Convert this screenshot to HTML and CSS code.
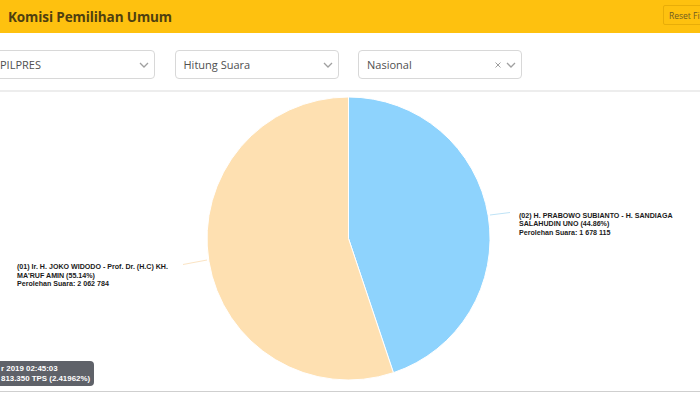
FILE: index.html
```html
<!DOCTYPE html>
<html lang="id">
<head>
    <meta charset="UTF-8">
    <meta name="viewport" content="width=device-width, initial-scale=1.0">
    <title>Komisi Pemilihan Umum</title>
    <link rel="stylesheet" href="styles.css">
</head>
<body>
    <header class="topbar">
        <div class="topbar-title">Komisi Pemilihan Umum</div>
        <button class="reset-btn">Reset Filter</button>
    </header>

    <section class="filters">
        <div class="select">
            <span class="select-value">PILPRES</span>
            <span class="select-icons">
                <svg class="chevron" viewBox="0 0 10 6" width="10" height="6"><path d="M1 1 L5 5 L9 1" fill="none" stroke="#a0a0a0" stroke-width="1.3"/></svg>
            </span>
        </div>
        <div class="select">
            <span class="select-value">Hitung Suara</span>
            <span class="select-icons">
                <svg class="chevron" viewBox="0 0 10 6" width="10" height="6"><path d="M1 1 L5 5 L9 1" fill="none" stroke="#a0a0a0" stroke-width="1.3"/></svg>
            </span>
        </div>
        <div class="select">
            <span class="select-value">Nasional</span>
            <span class="select-icons">
                <svg class="clear" viewBox="0 0 6 6" width="6" height="6"><path d="M0.5 0.5 L5.5 5.5 M5.5 0.5 L0.5 5.5" fill="none" stroke="#a0a0a0" stroke-width="1"/></svg>
                <svg class="chevron" viewBox="0 0 10 6" width="10" height="6"><path d="M1 1 L5 5 L9 1" fill="none" stroke="#a0a0a0" stroke-width="1.3"/></svg>
            </span>
        </div>
    </section>

    <main class="chart">
        <svg class="pie" viewBox="0 0 700 299" width="700" height="299">
            <path class="slice-02" d="M348.5 146.5 L348.5 5 A141.5 141.5 0 0 1 393.4 280.7 Z"/>
            <path class="slice-01" d="M348.5 146.5 L393.4 280.7 A141.5 141.5 0 1 1 348.5 5 Z"/>
            <path class="tick-02" d="M490 123 L510 120.5"/>
            <path class="tick-01" d="M207 168 L183 172.5"/>
            <text class="pie-label" x="519" y="125.5">(02) H. PRABOWO SUBIANTO - H. SANDIAGA</text>
            <text class="pie-label" x="519" y="134.3">SALAHUDIN UNO (44.86%)</text>
            <text class="pie-label" x="519" y="143">Perolehan Suara: 1 678 115</text>
            <text class="pie-label" x="17" y="177.2">(01) Ir. H. JOKO WIDODO - Prof. Dr. (H.C) KH.</text>
            <text class="pie-label" x="17" y="185.8">MA'RUF AMIN (55.14%)</text>
            <text class="pie-label" x="17" y="194.4">Perolehan Suara: 2 062 784</text>
        </svg>

        <div class="update-info">
            <div>r 2019 02:45:03</div>
            <div>813.350 TPS (2.41962%)</div>
        </div>
    </main>
</body>
</html>
```

FILE: styles.css
```css
body {
    margin: 0;
    padding: 0;
    font-family: 'Open Sans', 'Noto Sans', sans-serif;
    background-color: #ffffff;
    overflow: hidden;
    width: 700px;
    height: 393px;
}

.topbar {
    height: 33px;
    margin-right: -33px;
    padding: 0 8px;
    background-color: #fec10f;
    display: flex;
    align-items: center;
    justify-content: space-between;
    box-sizing: border-box;
}

.topbar-title {
    font-size: 13.5px;
    font-weight: bold;
    color: #4f3f0f;
    letter-spacing: -0.1px;
}

.reset-btn {
    height: 20px;
    width: 62px;
    margin-top: -3px;
    padding: 0 5px;
    background-color: #fec10f;
    border: 1px solid #e8ad08;
    border-radius: 2px;
    font-family: 'Open Sans', sans-serif;
    font-size: 8.5px;
    color: #6e5a22;
    text-align: left;
    white-space: nowrap;
}

.filters {
    display: flex;
    gap: 19.5px;
    margin-left: -9px;
    padding: 17px 0 11px;
    border-bottom: 2px solid #ededed;
}

.select {
    width: 164px;
    height: 29px;
    box-sizing: border-box;
    border: 1px solid #d8d8d8;
    border-radius: 4px;
    display: flex;
    align-items: center;
    justify-content: space-between;
    padding: 0 4px 0 8px;
    background-color: #fff;
}

.select-value {
    font-size: 11px;
    color: #505050;
}

.select-icons {
    display: flex;
    align-items: center;
    gap: 5px;
    padding-right: 1px;
}

.chart {
    position: relative;
    height: 299px;
    border-bottom: 1px solid #cfcfcf;
}

.pie {
    display: block;
}

.slice-02 {
    fill: #8ed3fd;
    stroke: #ffffff;
    stroke-width: 1;
}

.slice-01 {
    fill: #fee0b1;
    stroke: #ffffff;
    stroke-width: 1;
}

.tick-02 {
    stroke: #bfe3f6;
    stroke-width: 1;
    fill: none;
}

.tick-01 {
    stroke: #fbe4c4;
    stroke-width: 1;
    fill: none;
}

.pie-label {
    font-family: 'Liberation Sans', Arial, sans-serif;
    font-size: 7.1px;
    font-weight: bold;
    fill: #1a1a1a;
}

.update-info {
    position: absolute;
    left: 0;
    bottom: 5px;
    width: 94px;
    height: 25px;
    box-sizing: border-box;
    padding: 3px 0 0 1px;
    background-color: #5f6269;
    border-radius: 0 4px 4px 0;
    font-family: 'Liberation Sans', Arial, sans-serif;
    font-size: 7.9px;
    font-weight: bold;
    line-height: 9.5px;
    color: #ffffff;
    white-space: nowrap;
}
```
